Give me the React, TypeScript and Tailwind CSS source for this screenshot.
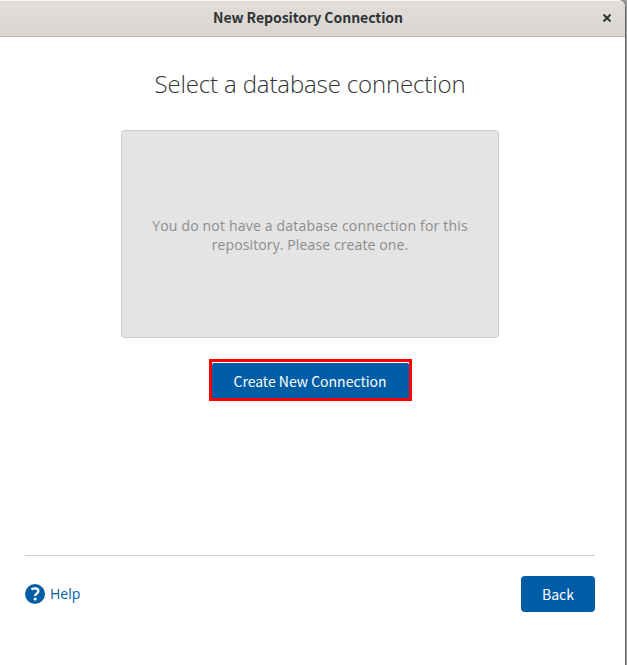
export default function App() {
  return (
    <div className="flex h-[665px] w-[627px] overflow-hidden bg-[#999]">
      <div className="flex h-full w-[626px] flex-col rounded-tr-[8px] border-r border-[#686868] bg-white font-['Open_Sans',sans-serif]">
        <header className="grid h-[37px] grid-cols-[38px_1fr_38px] items-center rounded-tr-[7px] border-t border-b border-t-[#f6f5f4] border-b-[#bfb8b1] bg-gradient-to-b from-[#e1dedb] to-[#d9d6d0]">
          <span />
          <h1 className="-mt-[4px] pr-[9px] text-center font-['Noto_Sans_CJK_SC',sans-serif] text-[14px] leading-[20px] font-bold tracking-[-0.05px] text-[#2e3436]">New Repository Connection</h1>
          <button aria-label="Close" className="-mt-px flex justify-center pl-[2px]">
            <svg width="8" height="8" viewBox="0 0 8 8" stroke="#2e3436" strokeWidth="2"><path d="M0.5 0.5 7.5 7.5M7.5 0.5 0.5 7.5" /></svg>
          </button>
        </header>
        <main className="flex flex-1 flex-col pr-[30px] pl-[25px]">
          <section className="flex h-[519px] flex-col items-center border-b border-[#ccc]">
            <h2 className="mt-[30px] text-[24px] leading-[34px] font-light tracking-[-0.14px] text-[#333]">Select a database connection</h2>
            <div className="mt-[29px] flex h-[208px] w-[378px] items-center justify-center rounded-[4px] border border-[#ccc] bg-[#e4e4e4] text-center text-[14px] leading-[19px] text-[#8c8c8c]">
              <p className="pt-[2px]">
                <span className="block tracking-[0.19px]">You do not have a database connection for this</span>
                <span className="block tracking-[0.11px]">repository. Please create one.</span>
              </p>
            </div>
            <div className="mt-[21px] h-[42px] w-[203px] border-[3px] border-[#ff0000] bg-white pt-px">
              <button className="h-full w-full rounded-t-[2px] bg-[#005da6] pt-px font-['Noto_Sans_CJK_SC',sans-serif] text-[14px] text-white">Create New Connection</button>
            </div>
          </section>
          <footer className="mt-5 flex items-center justify-between">
            <a className="flex items-center gap-[5px] text-[14px] text-[#005da6]">
              <svg width="20" height="20" viewBox="0 0 20 20" fill="none"><circle cx="10" cy="10" r="10" fill="#005da6" /><path d="M6.4 5.4C9.4 3.5 13.3 4.3 13.3 7.2C13.3 9.7 10.1 9.6 10.1 12" stroke="white" strokeWidth="2.4" /><circle cx="10.1" cy="15" r="1.5" fill="white" /></svg>
              <span className="-mt-[2px]">Help</span>
            </a>
            <button className="h-9 w-[74px] rounded-[4px] bg-[#005da6] pt-px font-['Noto_Sans_CJK_SC',sans-serif] text-[14px] text-white">Back</button>
          </footer>
        </main>
      </div>
    </div>
  );
}
